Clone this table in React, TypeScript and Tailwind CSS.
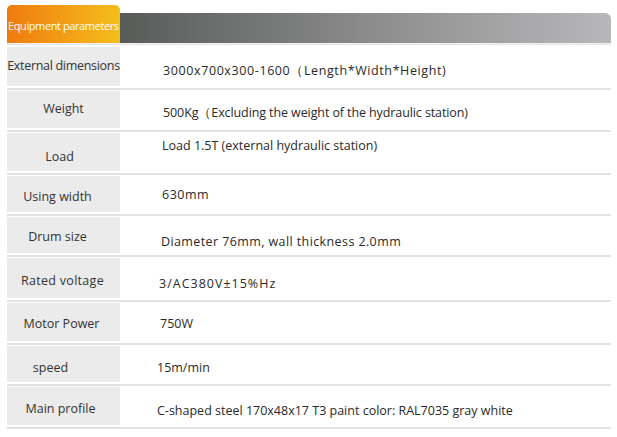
import React from "react";

type Row = {
  label: string;
  value: string;
  cell: string;
  labelCls: string;
  valueCls: string;
};

const rows: Row[] = [
  {
    label: "External dimensions",
    value: "3000x700x300-1600（Length*Width*Height)",
    cell: "mt-[2px] h-[39px]",
    labelCls: "pt-[0px] pr-[0px] tracking-[-0.3px]",
    valueCls: "pt-[9px] pl-[43px] tracking-[0.6px]",
  },
  {
    label: "Weight",
    value: "500Kg（Excluding the weight of the hydraulic station)",
    cell: "mt-[1px] h-[37px]",
    labelCls: "pt-[0px] pr-[0px]",
    valueCls: "pt-[7px] pl-[43px] tracking-[-0.1px]",
  },
  {
    label: "Load",
    value: "Load 1.5T (external hydraulic station)",
    cell: "mt-[1px] h-[38px]",
    labelCls: "pt-[10px] pr-[8px]",
    valueCls: "pl-[42px] -mt-[12px]",
  },
  {
    label: "Using width",
    value: "630mm",
    cell: "mt-[1px] h-[36px]",
    labelCls: "pt-[6px] pr-[12px]",
    valueCls: "pt-[3px] pl-[42px] tracking-[0.5px]",
  },
  {
    label: "Drum size",
    value: "Diameter 76mm, wall thickness 2.0mm",
    cell: "mt-[1px] h-[36px]",
    labelCls: "pt-[4px] pr-[12px]",
    valueCls: "pt-[14px] pl-[41px] tracking-[0.4px]",
  },
  {
    label: "Rated voltage",
    value: "3/AC380V±15%Hz",
    cell: "mt-[1px] h-[40px]",
    labelCls: "pt-[6px] pr-[2px] tracking-[0.3px]",
    valueCls: "pt-[12px] pl-[39px] tracking-[1px]",
  },
  {
    label: "Motor Power",
    value: "750W",
    cell: "mt-[1px] h-[38px]",
    labelCls: "pt-[4px] pr-[4px]",
    valueCls: "pt-[4px] pl-[40px]",
  },
  {
    label: "speed",
    value: "15m/min",
    cell: "mt-[1px] h-[36px]",
    labelCls: "pt-[8px] pr-[26px]",
    valueCls: "pt-[8px] pl-[37px]",
  },
  {
    label: "Main profile",
    value: "C-shaped steel 170x48x17 T3 paint color: RAL7035 gray white",
    cell: "mt-[1px] h-[38px]",
    labelCls: "pt-[6px] pr-[6px]",
    valueCls: "pt-[10px] pl-[37px]",
  },
];

export default function App() {
  return (
    <div
      className="w-[617px] h-[437px] bg-white pl-[7px] pr-[6px] pt-[5px] overflow-hidden"
      style={{ fontFamily: '"Open Sans", "Noto Sans", sans-serif' }}
    >
      <div className="flex items-end h-[38px]">
        <div className="w-[113px] h-[38px] rounded-t-[5px] bg-linear-to-r from-[#ee7b0f] to-[#f4bd1c] flex items-center pl-[1px] pt-[2px]">
          <span className="text-white text-[11px] tracking-[-0.4px] leading-none whitespace-nowrap">
            Equipment parameters
          </span>
        </div>
        <div className="flex-1 h-[30px] rounded-tr-[6px] bg-linear-to-r from-[#585c59] via-[#8a8b8a] to-[#b8b8bb]" />
      </div>
      <div className="h-[1px] bg-[#f3f3f3]" />
      <div className="h-[1px] bg-[#e4e4e4]" />
      {rows.map((r) => (
        <div key={r.label}>
          <div className={`flex ${r.cell}`}>
            <div
              className={`w-[113px] h-full bg-[#ebebeb] flex items-center justify-center text-[12.5px] text-[#333] whitespace-nowrap ${r.labelCls}`}
            >
              {r.label}
            </div>
            <div
              className={`flex-1 flex items-center text-[12.5px] text-[#2a2a2a] whitespace-nowrap ${r.valueCls}`}
            >
              {r.value}
            </div>
          </div>
          <div className="mt-[2px] h-[2px] bg-[#e2e2e2]" />
        </div>
      ))}
    </div>
  );
}
